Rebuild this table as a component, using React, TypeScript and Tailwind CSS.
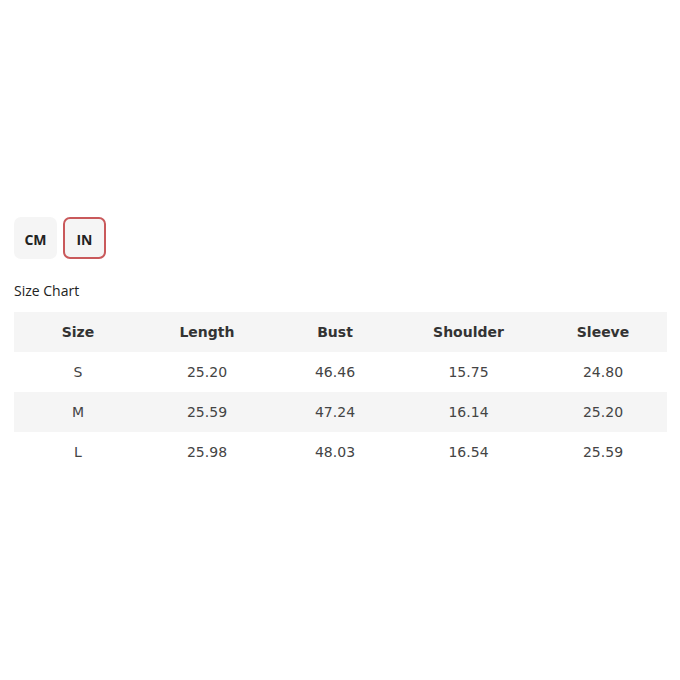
const columns = ['Size', 'Length', 'Bust', 'Shoulder', 'Sleeve'];
const widths = ['w-[128px]', 'w-[130px]', 'w-[126px]', 'w-[141px]', 'w-[128px]'];

const rows = [
  ['S', '25.20', '46.46', '15.75', '24.80'],
  ['M', '25.59', '47.24', '16.14', '25.20'],
  ['L', '25.98', '48.03', '16.54', '25.59'],
];

export default function App() {
  return (
    <div className="w-[680px] h-[680px] bg-white px-[14px] pt-[217px]">
      {/* unit toggle */}
      <div className="flex gap-[6px]" style={{ fontFamily: '"Open Sans", "Noto Sans", sans-serif' }}>
        <button className="w-[43px] h-[42px] pt-[3px] rounded-[7px] bg-[#f5f5f5] text-[14px] font-bold text-[#222]">
          CM
        </button>
        <button className="w-[43px] h-[42px] pt-[3px] rounded-[7px] bg-[#f5f5f5] border-2 border-[#c9595b] text-[14px] font-bold text-[#222]">
          IN
        </button>
      </div>

      <p
        className="mt-[22px] text-[14px] leading-5 text-[#222]"
        style={{ fontFamily: '"Open Sans", "Noto Sans", sans-serif' }}
      >
        Size Chart
      </p>

      <table
        className="mt-[11px] w-[653px] table-fixed border-collapse text-[14px] text-[#444]"
        style={{ fontFamily: '"DejaVu Sans", Verdana, sans-serif' }}
      >
        <thead>
          <tr className="bg-[#f5f5f5]">
            {columns.map((c, i) => (
              <th key={c} className={`${widths[i]} h-10 text-center font-bold text-[#333]`}>
                {c}
              </th>
            ))}
          </tr>
        </thead>
        <tbody>
          {rows.map((r, i) => (
            <tr key={r[0]} className={i % 2 === 1 ? 'bg-[#f5f5f5]' : 'bg-white'}>
              {r.map((v, j) => (
                <td key={j} className="h-10 text-center">
                  {v}
                </td>
              ))}
            </tr>
          ))}
        </tbody>
      </table>
    </div>
  );
}
